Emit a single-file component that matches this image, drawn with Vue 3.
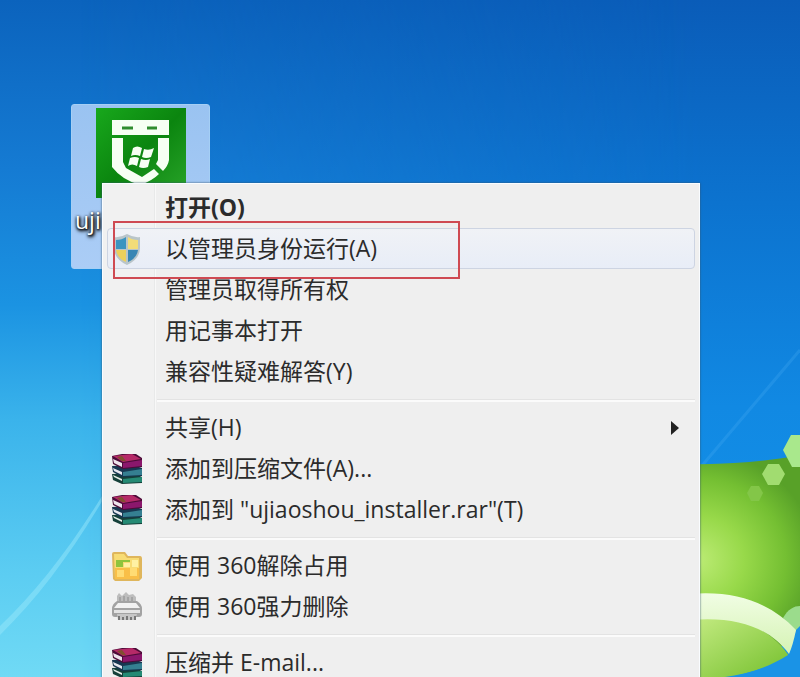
<template>
  <main class="desktop">
    <!-- Wallpaper -->
    <svg class="wallpaper" viewBox="0 0 800 677" preserveAspectRatio="none" aria-hidden="true">
      <defs>
        <linearGradient id="sky" x1="0" y1="0" x2="0" y2="1">
          <stop offset="0" stop-color="#0b63bd" />
          <stop offset="0.25" stop-color="#157bd3" />
          <stop offset="0.45" stop-color="#1b93e2" />
          <stop offset="0.62" stop-color="#3ab3eb" />
          <stop offset="0.85" stop-color="#5ccdf2" />
          <stop offset="1" stop-color="#70daf5" />
        </linearGradient>
        <linearGradient id="skyRight" x1="0" y1="0" x2="0" y2="1">
          <stop offset="0" stop-color="#0a5cb8" />
          <stop offset="0.3" stop-color="#0c73cf" />
          <stop offset="0.6" stop-color="#1189e3" />
          <stop offset="1" stop-color="#1596ea" />
        </linearGradient>
        <linearGradient id="skyFade" x1="0" y1="0" x2="1" y2="0">
          <stop offset="0.1" stop-color="#000" />
          <stop offset="0.88" stop-color="#fff" />
        </linearGradient>
        <mask id="skyMask">
          <rect width="800" height="677" fill="url(#skyFade)" />
        </mask>
        <radialGradient id="leaf" gradientUnits="userSpaceOnUse" cx="0" cy="0" r="1" gradientTransform="translate(696 560) scale(120 110)">
          <stop offset="0" stop-color="#bdec76" />
          <stop offset="0.4" stop-color="#98d94a" />
          <stop offset="0.75" stop-color="#74bf32" />
          <stop offset="1" stop-color="#58a128" />
        </radialGradient>
        <linearGradient id="leafLow" x1="0" y1="0" x2="1" y2="1">
          <stop offset="0" stop-color="#c6ec84" />
          <stop offset="1" stop-color="#74bf2c" />
        </linearGradient>
        <linearGradient id="band" x1="0" y1="0" x2="0" y2="1">
          <stop offset="0" stop-color="#f1fde4" />
          <stop offset="1" stop-color="#d5f3b4" />
        </linearGradient>
      </defs>
      <rect width="800" height="677" fill="url(#sky)" />
      <rect width="800" height="677" fill="url(#skyRight)" mask="url(#skyMask)" />
      <path d="M0 626C36 592 70 548 104 493L104 498C72 552 38 598 0 635Z" fill="#9be9fb" opacity="0.45" />
      <path d="M700 468L800 350" stroke="#4fb0f5" stroke-width="3" opacity="0.25" />
      <path d="M690 464C730 465 770 461 800 455V640L690 677Z" fill="url(#leaf)" />
      <path d="M783 618C788 609 794 606 800 606V635H795Z" fill="#9bdc8c" />
      <path d="M690 618C735 612 770 628 789 656C770 668 745 674 725 677H690Z" fill="url(#leafLow)" />
      <path d="M796 630L800 626V677H730C755 672 772 665 788 655Z" fill="#1a93e6" />
      <path d="M690 594C737 590 772 604 796 630Q793 645 789 654C769 627 736 616 690 620Z" fill="url(#band)" />
      <path d="M783 450L791 435H800V467H792Z" fill="#a9e88c" />
      <path d="M762 474L768 464H779L785 474L779 485H768Z" fill="#a1dc70" />
      <path d="M747 493L751 486H759L763 493L759 501H751Z" fill="#83c648" />
    </svg>

    <!-- Selected desktop shortcut -->
    <div class="shortcut">
      <svg class="shortcut-icon" viewBox="0 0 90 90" aria-hidden="true">
        <defs>
          <linearGradient id="tile" x1="0" y1="0" x2="1" y2="1">
            <stop offset="0" stop-color="#18a81c" />
            <stop offset="0.5" stop-color="#0b850f" />
            <stop offset="1" stop-color="#2aa52a" />
          </linearGradient>
        </defs>
        <rect width="90" height="90" fill="url(#tile)" />
        <path d="M16 12H73V27H16ZM16 30H27V54L30 60L46 69L58 61L63 66Q56 73 44 77Q26 72 16 59ZM62 30H73V52Q72 58 67 63L60 56L62 52Z" fill="#f6fff3" />
        <path d="M26 20H37M51 20H61" stroke="#2f8c2e" stroke-width="3" />
        <path d="M37 40Q41 37 46 40L44 48Q39 46 35 48ZM48 41Q53 43 58 40L55 49Q50 51 46 49ZM34 50Q39 48 43 50L41 58Q36 55 32 58ZM45 51Q50 53 54 51L52 59Q47 61 43 59Z" fill="#f6fff3" />
      </svg>
      <span class="shortcut-label">uji</span>
    </div>

    <!-- Context menu -->
    <nav class="menu">
      <ul v-for="(group, i) in groups" :key="i" class="group">
        <li v-for="item in group" :key="item.label">
          <button type="button" class="item" :class="{ bold: item.bold, hovered: item.hovered }">
            <span class="icon">
              <svg v-if="item.icon === 'shield'" viewBox="0 0 32 32" aria-hidden="true">
                <path d="M16 1Q23 5 29 4V15Q29 26 16 32Q3 26 3 15V4Q9 5 16 1Z" fill="#b9c5c9" />
                <path d="M15 4V16H5V7Q11 7 15 4Z" fill="#3b94c0" />
                <path d="M17 4Q21 7 27 7V16H17Z" fill="#f2dc78" />
                <path d="M5 17H15V29Q6 25 5 17Z" fill="#ecd05c" />
                <path d="M17 17H27Q26 25 17 29Z" fill="#3886b4" />
              </svg>
              <svg v-else-if="item.icon === 'rar'" viewBox="0 0 32 32" aria-hidden="true">
                <path d="M1 21L22 20L31 24V30L11 31L2 27Z" fill="#153f39" />
                <path d="M12 26L31 24V29L12 30Z" fill="#258a74" />
                <path d="M2 22L11 26V28L3 24Z" fill="#e6eee8" />
                <path d="M1 13L22 12L31 15V23L11 24L2 19Z" fill="#173751" />
                <path d="M12 19L31 16V22L12 23Z" fill="#357f91" />
                <path d="M2 15L11 19V22L3 18Z" fill="#e7e7ef" />
                <path d="M1 3L11 1L25 1L31 5V14L12 16L2 11Z" fill="#4c0b38" />
                <path d="M2 3L21 1L30 6L12 9Z" fill="#b52a68" />
                <path d="M12 10L31 7V13L12 15Z" fill="#8b176c" />
                <path d="M2 6L11 10V14L3 10Z" fill="#eee3ed" />
                <path d="M6 4L11 3L15 8L11 8Z" fill="#805030" />
              </svg>
              <svg v-else-if="item.icon === 'folder'" viewBox="0 0 32 32" aria-hidden="true">
                <path d="M1 4Q1 2 3 2H14L17 6H29Q31 6 31 9V28L28 31H4L2 29Z" fill="#dfb65c" />
                <path d="M3 4H13L16 8H28V28H4Z" fill="#f8dc74" />
                <path d="M5 10H19V12H12V17H5Z" fill="#8fc43d" />
                <path d="M13 13H19V17H13ZM21 10H27V17H21Z" fill="#fff1a4" />
                <path d="M4 18H28V29H4Z" fill="#f9bf48" />
                <path d="M6 20H13V27H6ZM19 18H26V26H19Z" fill="#ffdc74" />
              </svg>
              <svg v-else-if="item.icon === 'shredder'" viewBox="0 0 32 32" aria-hidden="true">
                <path d="M6 13V5L8 2L11 5L15 1L18 4L22 3L25 6V13Z" fill="#bdbdbd" />
                <path d="M9 6V11M13 5V11M17 6V11M21 6V11" stroke="#8c8c8c" stroke-width="1" />
                <path d="M6 10H26Q31 13 31 18V23Q31 26 28 26H4Q1 26 1 23V18Q1 13 6 10Z" fill="#a3a3a3" />
                <path d="M7 12H25L29 17H3Z" fill="#f2f2f2" />
                <path d="M3 19H29V22H3Z" fill="#e4e4e4" />
                <path d="M6 23H26L24 29H7Z" fill="#c6c6c6" />
                <path d="M8 25V29M12 26V29M16 25V29M20 26V29M24 25V29" stroke="#777" stroke-width="2" />
              </svg>
            </span>
            <span class="label">{{ item.label }}</span>
            <svg v-if="item.submenu" class="arrow" viewBox="0 0 8 14" aria-hidden="true">
              <path d="M0 0L8 7L0 14Z" fill="#222" />
            </svg>
          </button>
        </li>
      </ul>
    </nav>

    <!-- Red callout around the admin entry -->
    <div class="callout"></div>
  </main>
</template>

<script setup>
const groups = [
  [
    { label: '打开(O)', bold: true },
    { label: '以管理员身份运行(A)', icon: 'shield', hovered: true },
    { label: '管理员取得所有权' },
    { label: '用记事本打开' },
    { label: '兼容性疑难解答(Y)' }
  ],
  [
    { label: '共享(H)', submenu: true },
    { label: '添加到压缩文件(A)...', icon: 'rar' },
    { label: '添加到 "ujiaoshou_installer.rar"(T)', icon: 'rar' }
  ],
  [
    { label: '使用 360解除占用', icon: 'folder' },
    { label: '使用 360强力删除', icon: 'shredder' }
  ],
  [
    { label: '压缩并 E-mail...', icon: 'rar' }
  ]
]
</script>

<style>
body {
  margin: 0;
}
</style>

<style scoped>
.desktop {
  position: relative;
  height: 100vh;
  overflow: hidden;
  background: #1b93e2;
  font-family: "Open Sans", "Noto Sans CJK SC", sans-serif;
}

.wallpaper {
  position: absolute;
  top: 0;
  left: 0;
  width: 100%;
  height: 100%;
}

.shortcut {
  position: absolute;
  top: 104px;
  left: 71px;
  box-sizing: border-box;
  width: 139px;
  height: 165px;
  padding: 3px;
  display: flex;
  flex-direction: column;
  align-items: center;
  gap: 8px;
  border: 1px solid #a5cff5;
  border-radius: 3px;
  background: linear-gradient(#9ac3f1, #abcdf6);
}

.shortcut-icon {
  width: 90px;
  height: 90px;
}

.shortcut-label {
  align-self: flex-start;
  color: #fff;
  font-size: 23px;
  line-height: 28px;
  text-shadow: 1px 1px 3px #000, 0 1px 3px #000, 1px 2px 4px #000;
}

.menu {
  position: absolute;
  top: 183px;
  left: 102px;
  right: 100px;
  box-sizing: border-box;
  padding: 3px 4px;
  border: 1px solid #f9fcff;
  background: linear-gradient(to right, #f1f1f1 51px, #e8e9e9 51px, #e8e9e9 52px, #f8f8f8 52px, #f8f8f8 53px, #efefef 53px);
  box-shadow: 0 0 2px #35546f;
}

.group {
  margin: 0;
  padding: 0;
  list-style: none;
}

.group + .group {
  padding-top: 15px;
  background: linear-gradient(#e3e3e3, #e3e3e3) 50px 7px / 100% 1px no-repeat,
    linear-gradient(#fbfbfb, #fbfbfb) 50px 8px / 100% 2px no-repeat;
}

.item {
  display: flex;
  align-items: center;
  box-sizing: border-box;
  width: 100%;
  height: 41px;
  padding: 0 15px 0 3px;
  border: 1px solid transparent;
  border-radius: 4px;
  background: none;
  color: #2b2b2b;
  font-family: inherit;
  font-size: 23px;
  line-height: 32px;
  text-align: left;
}

.item.bold {
  font-weight: 700;
}

.item.hovered {
  border-color: #cdd4e2;
  background: linear-gradient(#f0f2f6, #e8edf7);
}

.icon {
  width: 32px;
  height: 32px;
  margin-right: 22px;
}

.icon svg {
  display: block;
  width: 100%;
  height: 100%;
}

.label {
  flex: 1;
  padding-bottom: 1px;
  white-space: nowrap;
}

.arrow {
  width: 8px;
  height: 14px;
}

.callout {
  position: absolute;
  top: 221px;
  left: 113px;
  box-sizing: border-box;
  width: 347px;
  height: 58px;
  border: 2px solid #cf4a52;
  pointer-events: none;
}
</style>
